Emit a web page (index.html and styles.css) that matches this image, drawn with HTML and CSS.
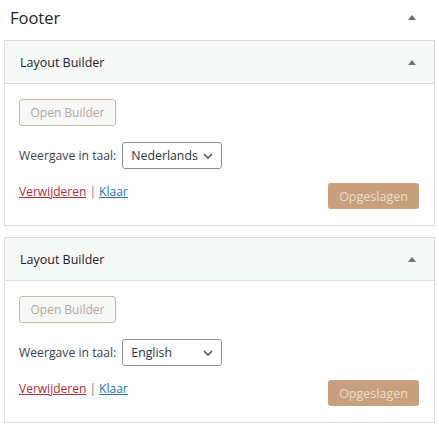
FILE: index.html
```html
<!DOCTYPE html>
<html lang="nl">
<head>
<meta charset="utf-8">
<title>Footer</title>
<link rel="stylesheet" href="styles.css">
</head>
<body>
<div class="sidebar">
  <div class="sidebar-head">
    <h2 class="sidebar-title">Footer</h2>
    <span class="arrow"></span>
  </div>

  <div class="widget">
    <div class="widget-top">
      <h3 class="widget-title">Layout Builder</h3>
      <span class="arrow"></span>
    </div>
    <div class="widget-inside">
      <div><button class="btn-open" type="button">Open Builder</button></div>
      <div class="lang-row">
        <label class="lang-label">Weergave in taal:</label>
        <div class="select">
          <span class="select-value">Nederlands</span>
          <svg class="chev" width="10" height="6" viewBox="0 0 10 6"><path d="M1 1l4 4 4-4" fill="none" stroke="#50575e" stroke-width="1.6"/></svg>
        </div>
      </div>
      <div class="actions">
        <div class="links"><a class="link-del" href="#">Verwijderen</a> <span class="sep">|</span> <a class="link-done" href="#">Klaar</a></div>
        <button class="btn-save" type="button">Opgeslagen</button>
      </div>
    </div>
  </div>

  <div class="widget">
    <div class="widget-top">
      <h3 class="widget-title">Layout Builder</h3>
      <span class="arrow"></span>
    </div>
    <div class="widget-inside">
      <div><button class="btn-open" type="button">Open Builder</button></div>
      <div class="lang-row">
        <label class="lang-label">Weergave in taal:</label>
        <div class="select">
          <span class="select-value">English</span>
          <svg class="chev" width="10" height="6" viewBox="0 0 10 6"><path d="M1 1l4 4 4-4" fill="none" stroke="#50575e" stroke-width="1.6"/></svg>
        </div>
      </div>
      <div class="actions">
        <div class="links"><a class="link-del" href="#">Verwijderen</a> <span class="sep">|</span> <a class="link-done" href="#">Klaar</a></div>
        <button class="btn-save" type="button">Opgeslagen</button>
      </div>
    </div>
  </div>
</div>
</body>
</html>
```

FILE: styles.css
```css
* { box-sizing: border-box; }
html, body { margin: 0; padding: 0; background: #fff; }
body {
  font-family: "Open Sans", "Noto Sans", sans-serif;
  font-size: 12px;
  color: #1d2327;
}
.sidebar { width: 439px; }
.sidebar-head {
  height: 40px;
  display: flex;
  align-items: center;
  justify-content: space-between;
  padding: 0 23px 6px 10px;
}
.sidebar-title {
  margin: 0;
  font-size: 16.5px;
  font-weight: 500;
  color: #1d2327;
}
.arrow {
  width: 0; height: 0;
  border-left: 4px solid transparent;
  border-right: 4px solid transparent;
  border-bottom: 5px solid #6b6f74;
}
.widget {
  margin: 0 4px 11px 4px;
  border: 1px solid #dcdcde;
  background: #fff;
}
.widget-top {
  height: 43px;
  display: flex;
  align-items: center;
  justify-content: space-between;
  padding: 0 18px 0 15px;
  background: #f6f7f7;
  border-bottom: 1px solid #dcdcde;
}
.widget-title {
  margin: 0;
  font-size: 12.5px;
  font-weight: 500;
  color: #1d2327;
}
.widget-inside {
  padding: 15px 15px 16px 14px;
  display: flex;
  flex-direction: column;
}
.btn-open {
  height: 27px;
  width: 97px;
  padding: 0;
  font: inherit;
  color: #b3a89f;
  background: #f6f7f7;
  border: 1px solid #cdb8a6;
  border-radius: 3px;
}
.lang-row {
  margin-top: 16px;
  display: flex;
  align-items: center;
}
.lang-label { color: #3c434a; margin-right: 6px; font-size: 12.2px; }
.select {
  width: 100px;
  height: 27px;
  border: 1px solid #8c8f94;
  border-radius: 3px;
  display: flex;
  align-items: center;
  justify-content: space-between;
  padding: 0 8px 0 8px;
  color: #2c3338;
  font-size: 12.3px;
}
.chev { display: block; }
.actions {
  margin-top: 14px;
  display: flex;
  justify-content: space-between;
  align-items: flex-start;
}
.links { line-height: 18px; color: #8c8f94; }
.link-del { color: #b32d2e; }
.link-done { color: #2271b1; }
.sep { color: #787c82; }
.btn-save {
  height: 26px;
  width: 91px;
  padding: 0;
  font: inherit;
  font-size: 12.5px;
  color: #eadccd;
  background: #c8a07e;
  border: 0;
  border-radius: 3px;
}
```
